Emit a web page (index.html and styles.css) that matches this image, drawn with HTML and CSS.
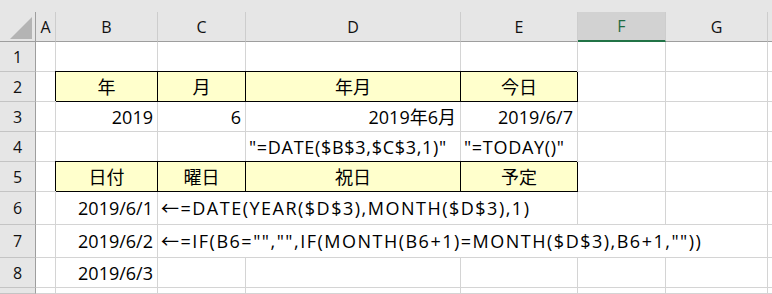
FILE: index.html
```html
<!DOCTYPE html>
<html lang="ja">
<head>
<meta charset="utf-8">
<link rel="stylesheet" href="styles.css">
</head>
<body>
<div class="sheet">
  <div class="strip"></div>

  <div class="ch corner"><div class="tri"></div></div>
  <div class="ch">A</div>
  <div class="ch">B</div>
  <div class="ch">C</div>
  <div class="ch">D</div>
  <div class="ch">E</div>
  <div class="ch sel">F</div>
  <div class="ch">G</div>
  <div class="ch last"></div>

  <div class="rh">1</div>
  <div class="c"></div><div class="c"></div><div class="c"></div><div class="c"></div><div class="c"></div><div class="c"></div><div class="c"></div><div class="c"></div>

  <div class="rh">2</div>
  <div class="c"></div>
  <div class="c y">年</div>
  <div class="c y">月</div>
  <div class="c y">年月</div>
  <div class="c y">今日</div>
  <div class="c"></div><div class="c"></div><div class="c"></div>

  <div class="rh">3</div>
  <div class="c"></div>
  <div class="c r">2019</div>
  <div class="c r">6</div>
  <div class="c r">2019年6月</div>
  <div class="c r">2019/6/7</div>
  <div class="c"></div><div class="c"></div><div class="c"></div>

  <div class="rh">4</div>
  <div class="c"></div>
  <div class="c"></div>
  <div class="c"></div>
  <div class="c l quoted">"=DATE($B$3,$C$3,1)"</div>
  <div class="c l quoted">"=TODAY()"</div>
  <div class="c"></div><div class="c"></div><div class="c"></div>

  <div class="rh">5</div>
  <div class="c"></div>
  <div class="c y">日付</div>
  <div class="c y">曜日</div>
  <div class="c y">祝日</div>
  <div class="c y">予定</div>
  <div class="c"></div><div class="c"></div><div class="c"></div>

  <div class="rh">6</div>
  <div class="c"></div>
  <div class="c r">2019/6/1</div>
  <div class="c l formula span3">←=DATE(YEAR($D$3),MONTH($D$3),1)</div>
  <div class="c"></div><div class="c"></div><div class="c"></div>

  <div class="rh">7</div>
  <div class="c"></div>
  <div class="c r">2019/6/2</div>
  <div class="c l formula span5">←=IF(B6="","",IF(MONTH(B6+1)=MONTH($D$3),B6+1,""))</div>
  <div class="c"></div>

  <div class="rh">8</div>
  <div class="c"></div>
  <div class="c r">2019/6/3</div>
  <div class="c"></div><div class="c"></div><div class="c"></div><div class="c"></div><div class="c"></div><div class="c"></div>

  <div class="rh"></div>
  <div class="c"></div><div class="c"></div><div class="c"></div><div class="c"></div><div class="c"></div><div class="c"></div><div class="c"></div><div class="c"></div>
</div>
</body>
</html>
```

FILE: styles.css
```css
html, body {
  margin: 0;
  padding: 0;
  background: #ffffff;
  overflow: hidden;
}

.sheet {
  display: grid;
  grid-template-columns: 36px 20px 102px 88px 215px 117px 88px 102px 1fr;
  grid-template-rows: 12px 30px 30px 30px 30px 30px 30px 33px 33px 30px 1fr;
  width: 772px;
  height: 294px;
  font-family: "Open Sans", "Noto Sans CJK JP", sans-serif;
  color: #000;
  background: #fff;
}

.strip {
  grid-column: 1 / -1;
  background: #e6e6e6;
}

.ch {
  background: #e6e6e6;
  border-right: 1px solid #cdcdcd;
  border-bottom: 1px solid #9e9e9e;
  box-sizing: border-box;
  display: flex;
  align-items: center;
  justify-content: center;
  font-size: 16px;
  color: #111;
}

.ch.corner {
  border-right: 1px solid #9e9e9e;
  position: relative;
}

.tri {
  position: absolute;
  left: 10px;
  top: 5px;
  width: 22px;
  height: 22px;
  background: #b4b4b4;
  clip-path: polygon(100% 0, 100% 100%, 0 100%);
}

.ch.sel {
  background: #d2d2d2;
  border-bottom: 2px solid #217346;
  color: #1e6b41;
}

.ch.last {
  border-right: none;
}

.rh {
  background: #e6e6e6;
  border-right: 1px solid #9e9e9e;
  border-bottom: 1px solid #c4c4c4;
  box-sizing: border-box;
  display: flex;
  align-items: center;
  justify-content: center;
  font-size: 16px;
  color: #111;
}

.c {
  border-right: 1px solid #d4d4d4;
  border-bottom: 1px solid #d4d4d4;
  box-sizing: border-box;
  display: flex;
  align-items: center;
  padding: 0 4px;
  white-space: nowrap;
  font-size: 18px;
  line-height: 1;
}

.c.r {
  justify-content: flex-end;
}

.c.l {
  justify-content: flex-start;
  padding-left: 3px;
}

.c.quoted {
  letter-spacing: 0.7px;
}

.c.formula {
  letter-spacing: 1.5px;
}

.c.y {
  background: #ffffcc;
  border-right-color: #000;
  border-bottom-color: #000;
  box-shadow: -1px -1px 0 #000;
  justify-content: center;
}

.span3 {
  grid-column: span 3;
}

.span5 {
  grid-column: span 5;
}
```
